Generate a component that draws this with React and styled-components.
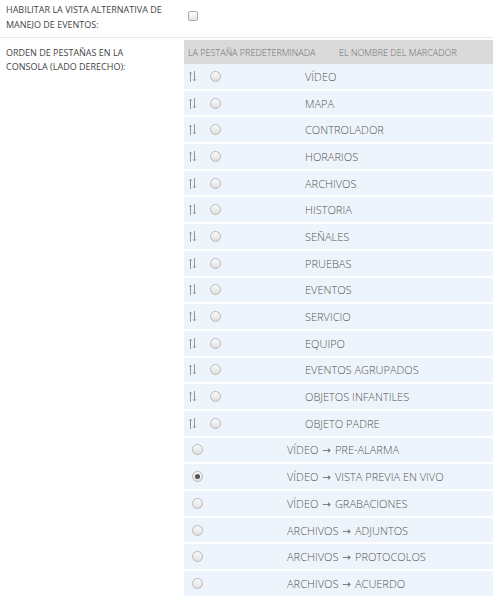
import React from "react";
import styled, { createGlobalStyle } from "styled-components";

const Global = createGlobalStyle`
  html, body { margin: 0; padding: 0; background: #fff; }
  body { font-family: "Open Sans", "Liberation Sans", sans-serif; }
`;

const Form = styled.div`
  width: 493px;
  display: flex;
  flex-direction: column;
`;

const FieldRow = styled.div`
  display: flex;
  border-bottom: ${(p) => (p.$divider ? "1px solid #e8e8e8" : "none")};
  height: ${(p) => (p.$height ? p.$height + "px" : "auto")};
`;

const Label = styled.div`
  width: 178px;
  padding-left: 6px;
  padding-top: ${(p) => p.$top}px;
  font-size: 9px;
  line-height: 14.5px;
  color: #444;
  text-transform: uppercase;
  flex-shrink: 0;
`;

const Control = styled.div`
  flex: 1;
  padding-top: ${(p) => p.$top}px;
  padding-left: ${(p) => p.$left || 0}px;
  min-width: 0;
`;

const Checkbox = styled.span`
  display: block;
  width: 8px;
  height: 8px;
  border: 1px solid #a9a9a9;
  border-radius: 2px;
  background: linear-gradient(#ffffff, #e4e4e4);
`;

const Table = styled.div`
  display: flex;
  flex-direction: column;
  gap: 2px;
`;

const Header = styled.div`
  height: 24px;
  background: #dadada;
  display: flex;
  align-items: center;
  padding-left: 4px;
  font-size: 9px;
  font-weight: 300;
  color: #6e6e6e;
  margin-bottom: -2px;
`;

const HeadCell = styled.div`
  width: ${(p) => (p.$w ? p.$w + "px" : "auto")};
  white-space: nowrap;
`;

const Row = styled.div`
  height: 24.7px;
  background: #eef4fb;
  display: flex;
  align-items: center;
  padding-left: ${(p) => p.$pad}px;
  font-size: 11px;
  font-weight: 300;
  color: #555;
  white-space: nowrap;
`;

const Handle = styled.span`
  width: 21px;
  display: flex;
  align-items: center;
`;

const RadioCell = styled.span`
  width: ${(p) => p.$w}px;
  display: flex;
  align-items: center;
`;

const Radio = styled.span`
  box-sizing: border-box;
  width: 11px;
  height: 11px;
  border-radius: 50%;
  border: 1px solid #b8b8b8;
  background: linear-gradient(#fbfbfb, #e0e0e0);
  display: flex;
  align-items: center;
  justify-content: center;
  &::after {
    content: "";
    width: 5px;
    height: 5px;
    border-radius: 50%;
    background: #555;
    display: ${(p) => (p.$checked ? "block" : "none")};
  }
`;

const Name = styled.span``;

const Arrow = styled.span`
  font-family: "DejaVu Sans", sans-serif;
  font-weight: 400;
  font-size: 10.5px;
  color: #6a6a6a;
  margin: 0 1px;
`;

const SortIcon = () => (
  <svg width="8" height="11" viewBox="0 0 8 11" fill="none" stroke="#8c8c8c" strokeWidth="0.9">
    <path d="M1.5 11V1.2M0.2 2.6L1.5 1.2L2.8 2.6" />
    <path d="M5.5 0V9.8M4.2 8.4L5.5 9.8L6.8 8.4" />
  </svg>
);

const sortable = [
  "VÍDEO",
  "MAPA",
  "CONTROLADOR",
  "HORARIOS",
  "ARCHIVOS",
  "HISTORIA",
  "SEÑALES",
  "PRUEBAS",
  "EVENTOS",
  "SERVICIO",
  "EQUIPO",
  "EVENTOS AGRUPADOS",
  "OBJETOS INFANTILES",
  "OBJETO PADRE",
];

const sub = [
  { from: "VÍDEO", to: "PRE-ALARMA" },
  { from: "VÍDEO", to: "VISTA PREVIA EN VIVO", checked: true },
  { from: "VÍDEO", to: "GRABACIONES" },
  { from: "ARCHIVOS", to: "ADJUNTOS" },
  { from: "ARCHIVOS", to: "PROTOCOLOS" },
  { from: "ARCHIVOS", to: "ACUERDO" },
];

export default function App() {
  return (
    <>
      <Global />
      <Form>
        <FieldRow $divider $height={37}>
          <Label $top={3}>
            Habilitar la vista alternativa de
            <br />
            manejo de eventos:
          </Label>
          <Control $top={11} $left={4}>
            <Checkbox />
          </Control>
        </FieldRow>
        <FieldRow>
          <Label $top={7.8}>
            Orden de pestañas en la
            <br />
            consola (lado derecho):
          </Label>
          <Control $top={2}>
            <Table>
              <Header>
                <HeadCell $w={151}>LA PESTAÑA PREDETERMINADA</HeadCell>
                <HeadCell>EL NOMBRE DEL MARCADOR</HeadCell>
              </Header>
              {sortable.map((n) => (
                <Row key={n} $pad={5}>
                  <Handle>
                    <SortIcon />
                  </Handle>
                  <RadioCell $w={95}>
                    <Radio />
                  </RadioCell>
                  <Name>{n}</Name>
                </Row>
              ))}
              {sub.map((s) => (
                <Row key={s.from + s.to} $pad={8}>
                  <RadioCell $w={95}>
                    <Radio $checked={s.checked} />
                  </RadioCell>
                  <Name>
                    {s.from} <Arrow>→</Arrow> {s.to}
                  </Name>
                </Row>
              ))}
            </Table>
          </Control>
        </FieldRow>
      </Form>
    </>
  );
}
